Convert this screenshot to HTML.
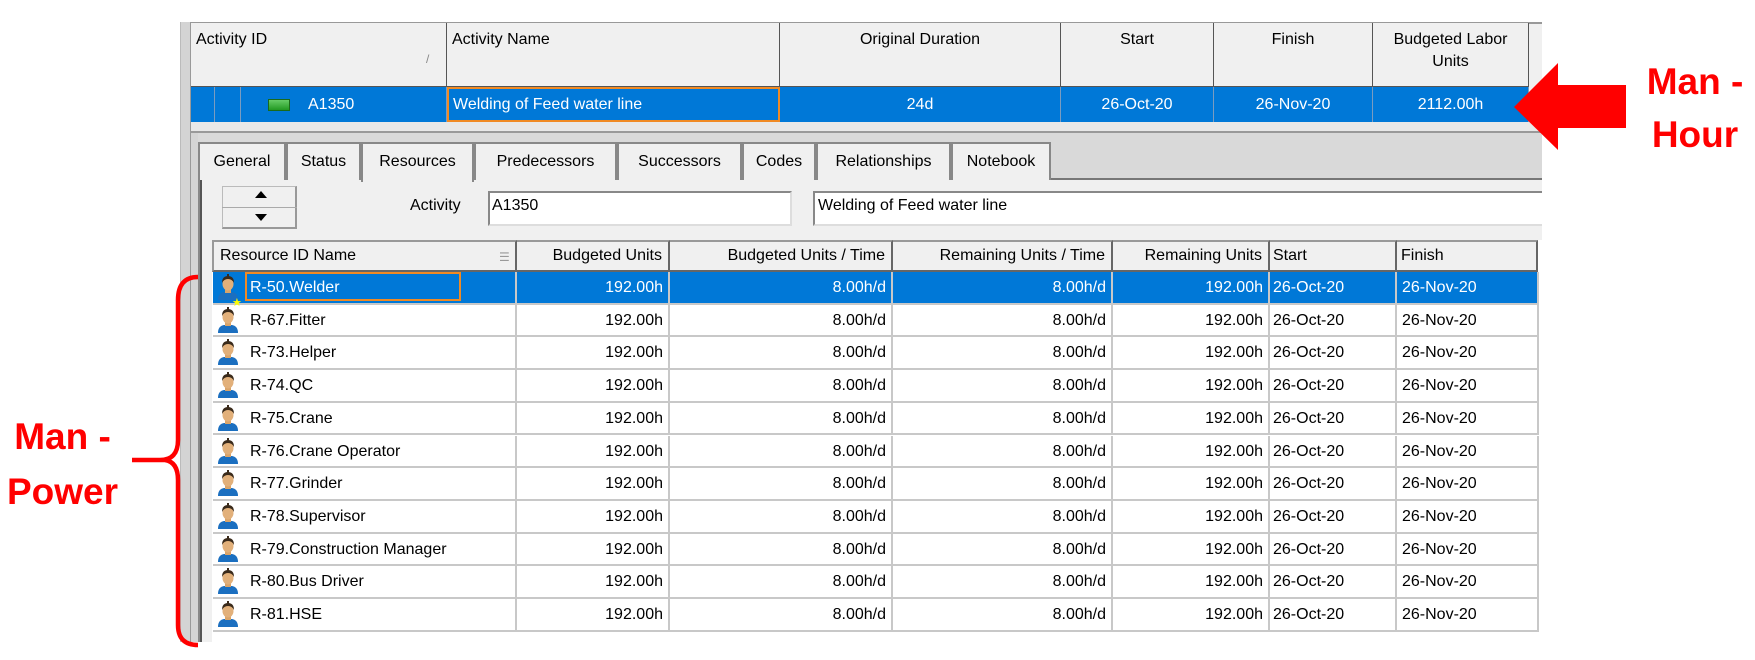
<!DOCTYPE html>
<html><head><meta charset="utf-8"><style>
*{margin:0;padding:0;box-sizing:border-box}
body{width:1755px;height:660px;background:#fff;position:relative;overflow:hidden;font-family:"Liberation Sans",sans-serif;font-size:16px;color:#000}
.a{position:absolute}
.hd{position:absolute;background:#f0f0f0;border-right:1px solid #555;border-bottom:1px solid #555;top:23px;height:64px;padding:6px 5px;line-height:22px}
.sel{position:absolute;top:87px;height:35px;background:#0078d7;color:#fff;border-right:1px solid #7a9cc0;line-height:35px;text-align:center}
.tab{position:absolute;top:142px;height:38px;border:2px solid #888;border-bottom:none;background:#f0f0f0;line-height:36px;text-align:center}
.gh{position:absolute;top:240px;height:32px;background:#f0f0f0;border-right:2px solid #666;border-bottom:2px solid #666;border-top:2px solid #999;line-height:28px;padding:0 6px}
.row{position:absolute;left:213px;width:1326px;height:32.7px;border-bottom:2px solid #c8c8c8;line-height:31px}
.row div{position:absolute;top:0;height:100%;border-right:2px solid #c8c8c8;padding:0 5px;white-space:nowrap}
.r{text-align:right}
.sr{background:#0078d7;color:#fff}
.red{color:#f00;font-weight:bold;font-size:37px;position:absolute;text-align:center;line-height:40px}
</style></head><body>
<div class="a" style="left:180px;top:22px;width:20px;height:620px;background:#d4d4d4;border-left:1px solid #bbb"></div>
<div class="a" style="left:190px;top:22px;width:1px;height:620px;background:#999"></div>
<div class="a" style="left:200px;top:122px;width:1342px;height:520px;background:#f0f0f0;border-left:2px solid #555"></div>
<div class="a" style="left:191px;top:22px;width:1351px;height:100px;background:#f0f0f0;border-top:2px solid #999"></div>
<div class="hd" style="left:191px;width:256px">Activity ID<span class="a" style="left:235px;top:25px;color:#888;font-size:12px">/</span></div>
<div class="hd" style="left:447px;width:333px">Activity Name</div>
<div class="hd" style="left:780px;width:281px;text-align:center">Original Duration</div>
<div class="hd" style="left:1061px;width:153px;text-align:center">Start</div>
<div class="hd" style="left:1214px;width:159px;text-align:center">Finish</div>
<div class="hd" style="left:1373px;width:156px;text-align:center">Budgeted Labor Units</div>
<div class="sel" style="left:191px;width:24px"></div>
<div class="sel" style="left:215px;width:26px"></div>
<div class="sel" style="left:241px;width:206px;text-align:left"><span class="a" style="left:27px;top:12px;width:22px;height:12px;background:linear-gradient(#6c6,#292);border:1px solid #1a6a1a"></span><span style="margin-left:67px">A1350</span></div>
<div class="sel" style="left:447px;width:333px;text-align:left;border:2px solid #f08a24;padding-left:4px;line-height:31px">Welding of Feed water line</div>
<div class="sel" style="left:780px;width:281px">24d</div>
<div class="sel" style="left:1061px;width:153px">26-Oct-20</div>
<div class="sel" style="left:1214px;width:159px">26-Nov-20</div>
<div class="sel" style="left:1373px;width:156px">2112.00h</div>
<div class="a" style="left:191px;top:122px;width:1351px;height:11px;background:#e8e8e8;border-bottom:2px solid #999"></div>
<div class="a" style="left:198px;top:133px;width:1344px;height:47px;background:#d9d9d9;border-bottom:2px solid #777"></div>
<div class="tab" style="left:198px;width:88px">General</div>
<div class="tab" style="left:286px;width:75px">Status</div>
<div class="tab" style="left:361px;width:113px;height:40px;z-index:2">Resources</div>
<div class="tab" style="left:474px;width:143px">Predecessors</div>
<div class="tab" style="left:617px;width:125px">Successors</div>
<div class="tab" style="left:742px;width:74px">Codes</div>
<div class="tab" style="left:816px;width:135px">Relationships</div>
<div class="tab" style="left:951px;width:100px">Notebook</div>
<div class="a" style="left:198px;top:180px;width:2px;height:462px;background:#888"></div>
<div class="a" style="left:222px;top:186px;width:75px;height:43px;border:1px solid #bbb;border-right:2px solid #999;border-bottom:2px solid #999;background:#f0f0f0"></div>
<div class="a" style="left:222px;top:207px;width:75px;height:1px;background:#aaa"></div>
<div class="a" style="left:255px;top:191px;border-left:6px solid transparent;border-right:6px solid transparent;border-bottom:7px solid #000"></div>
<div class="a" style="left:255px;top:214px;border-left:6px solid transparent;border-right:6px solid transparent;border-top:7px solid #000"></div>
<div class="a" style="left:410px;top:197px">Activity</div>
<div class="a" style="left:488px;top:191px;width:304px;height:35px;background:#fff;border:2px solid #888;border-right-color:#ddd;border-bottom-color:#ddd;padding:4px 2px">A1350</div>
<div class="a" style="left:813px;top:191px;width:729px;height:35px;background:#fff;border:2px solid #888;border-right:none;border-bottom-color:#ddd;padding:4px 3px">Welding of Feed water line</div>
<div class="a" style="left:212px;top:240px;width:1330px;height:402px;background:#fff"></div>
<div class="gh" style="left:212px;width:305px;border-left:2px solid #999">Resource ID Name<span class="a" style="left:285px;top:1px;color:#999;font-size:12px">☰</span></div>
<div class="gh" style="left:517px;width:153px;text-align:right">Budgeted Units</div>
<div class="gh" style="left:670px;width:223px;text-align:right">Budgeted Units / Time</div>
<div class="gh" style="left:893px;width:220px;text-align:right">Remaining Units / Time</div>
<div class="gh" style="left:1113px;width:157px;text-align:right">Remaining Units</div>
<div class="gh" style="left:1270px;width:127px;padding-left:3px">Start</div>
<div class="gh" style="left:1397px;width:141px;padding-left:4px">Finish</div>
<svg width="0" height="0" style="position:absolute"><defs><symbol id="p" viewBox="0 0 28 28"><path d="M4 27 Q4 20 10 19 L18 19 Q24 20 24 27Z" fill="#1b6fc0"/><rect x="11" y="16" width="6" height="4" fill="#d9a46a"/><ellipse cx="14" cy="11" rx="5.5" ry="6.5" fill="#e2b07a"/><path d="M8 10 Q8 3 14 3 Q20 3 20 10 Q18 6 14 6 Q10 6 8 10Z" fill="#3a2a1a"/><rect x="13" y="1" width="2" height="3" fill="#3a2a1a"/></symbol></defs></svg>
<div id="rows"></div>
<script>
var n=["R-50.Welder","R-67.Fitter","R-73.Helper","R-74.QC","R-75.Crane","R-76.Crane Operator","R-77.Grinder","R-78.Supervisor","R-79.Construction Manager","R-80.Bus Driver","R-81.HSE"],h="";
for(var i=0;i<n.length;i++){var t=272+i*32.7,s=i==0?" sr":"";
h+='<div class="row'+s+'" style="top:'+t+'px"><div style="left:0;width:304px"><svg class="a" style="left:1px;top:1px" width="28" height="28"><use href="#p"/></svg>'+(i==0?'<span class="a" style="left:32px;top:0;width:216px;height:29px;border:2px solid #f08a24"></span><span class="a" style="left:19px;top:16px;color:#ff0;font-size:11px">★</span>':'')+'<span style="margin-left:32px">'+n[i]+'</span></div><div class="r" style="left:304px;width:153px">192.00h</div><div class="r" style="left:457px;width:223px">8.00h/d</div><div class="r" style="left:680px;width:220px">8.00h/d</div><div class="r" style="left:900px;width:157px">192.00h</div><div style="left:1057px;width:127px;padding-left:3px">26-Oct-20</div><div style="left:1184px;width:142px;padding-left:5px">26-Nov-20</div></div>';}
document.getElementById("rows").innerHTML=h;
</script>
<svg class="a" style="left:0;top:0" width="1755" height="660">
<path d="M198 277 Q178 277 178 300 L178 440 Q178 460 160 460 M132 460 L165 460 Q178 462 178 480 L178 625 Q178 645 198 645" fill="none" stroke="#f00" stroke-width="4.5"/>
<polygon points="1514,107 1558,63 1558,85 1626,85 1626,128 1558,128 1558,150" fill="#f00"/>
</svg>
<div class="red" style="left:0;top:417px;width:125px">Man -</div>
<div class="red" style="left:0;top:472px;width:125px">Power</div>
<div class="red" style="left:1640px;top:62px;width:110px">Man -</div>
<div class="red" style="left:1640px;top:115px;width:110px">Hour</div>
</body></html>
